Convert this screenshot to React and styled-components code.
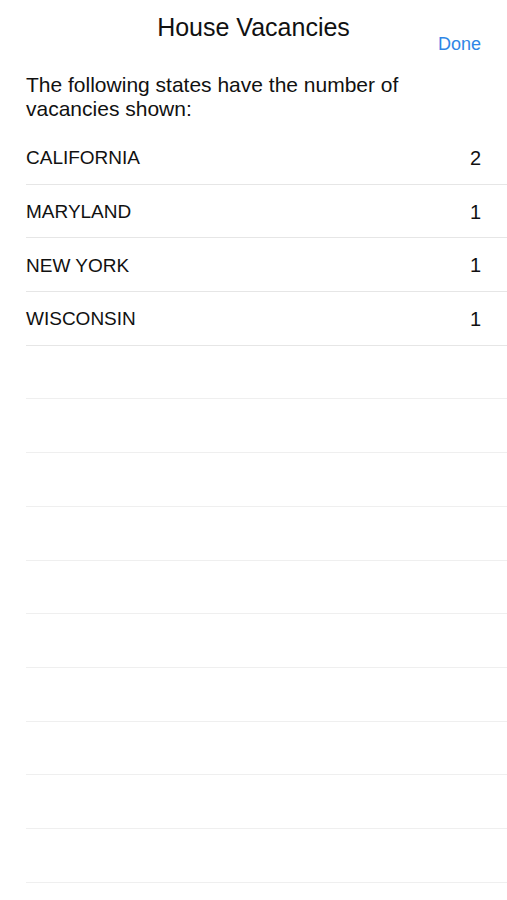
import React from "react";
import styled, { createGlobalStyle } from "styled-components";

const Global = createGlobalStyle`
  html, body { margin: 0; padding: 0; background: #ffffff; }
  body { font-family: "Liberation Sans", Arial, sans-serif; color: #111; }
`;

const Screen = styled.div`
  width: 507px;
  height: 900px;
  overflow: hidden;
  background: #fff;
  display: flex;
  flex-direction: column;
`;

const Header = styled.header`
  position: relative;
  height: 62px;
  display: flex;
  justify-content: center;
`;

const Title = styled.h1`
  margin: 13px 0 0;
  font-size: 25px;
  font-weight: 400;
  line-height: 28px;
  color: #111;
`;

const DoneButton = styled.button`
  position: absolute;
  right: 26px;
  top: 33px;
  border: 0;
  background: none;
  padding: 0;
  font: inherit;
  font-size: 18px;
  line-height: 22px;
  color: #2f86e6;
`;

const Intro = styled.p`
  margin: 11px 0 0 26px;
  width: 440px;
  font-size: 21px;
  line-height: 24px;
  color: #111;
`;

const List = styled.ul`
  list-style: none;
  margin: 10px 0 0 26px;
  padding: 0;
`;

const Row = styled.li`
  height: 53.7px;
  box-sizing: border-box;
  border-bottom: 1px solid ${(p) => (p.$empty ? "#efefef" : "#e6e6e6")};
  display: flex;
  align-items: center;
  justify-content: space-between;
  padding: 2px 26px 0 0;
  font-size: 19px;
  color: #111;
`;

const Count = styled.span`
  font-size: 20px;
`;

const rows = [
  ["CALIFORNIA", 2],
  ["MARYLAND", 1],
  ["NEW YORK", 1],
  ["WISCONSIN", 1],
];

export default function App() {
  return (
    <>
      <Global />
      <Screen>
        <Header>
          <Title>House Vacancies</Title>
          <DoneButton>Done</DoneButton>
        </Header>
        <Intro>The following states have the number of vacancies shown:</Intro>
        <List>
          {rows.map(([name, n]) => (
            <Row key={name}>
              <span>{name}</span>
              <Count>{n}</Count>
            </Row>
          ))}
          {Array.from({ length: 10 }).map((_, i) => (
            <Row key={i} $empty />
          ))}
        </List>
      </Screen>
    </>
  );
}
